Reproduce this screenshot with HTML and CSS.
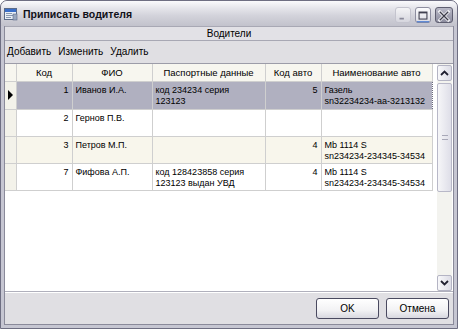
FILE: index.html
```html
<!DOCTYPE html>
<html lang="ru">
<head>
<meta charset="utf-8">
<title>Приписать водителя</title>
<link rel="stylesheet" href="styles.css">
</head>
<body>
<div class="window">
  <div class="titlebar">
    <svg class="app-icon" width="14" height="14" viewBox="0 0 14 14">
      <rect x="0.5" y="1.5" width="12" height="11" fill="#e8eef6" stroke="#5a6a88"/>
      <rect x="1" y="2" width="11" height="3" fill="#3a6ec8"/>
      <rect x="2" y="6" width="6" height="1" fill="#8898b0"/>
      <rect x="2" y="8" width="8" height="1" fill="#8898b0"/>
      <rect x="2" y="10" width="5" height="1" fill="#8898b0"/>
      <rect x="9" y="7" width="4" height="6" fill="#9aa8c0" stroke="#5a6a88" stroke-width="0.6"/>
    </svg>
    <span class="title">Приписать водителя</span>
    <div class="win-buttons">
      <span class="wbtn wbtn-min"><svg width="16" height="16" viewBox="0 0 16 16"><rect x="4" y="10" width="5" height="2" fill="#8a8a9a"/></svg></span>
      <span class="wbtn wbtn-max"><svg width="16" height="16" viewBox="0 0 16 16"><rect x="3.5" y="3.5" width="9" height="8" fill="none" stroke="#3c3c4c" stroke-width="1.2"/><rect x="3.5" y="3.5" width="9" height="1.5" fill="#3c3c4c"/><rect x="1" y="14" width="14" height="1.2" fill="#3a70d0"/></svg></span>
      <span class="wbtn wbtn-close"><svg width="17" height="16" viewBox="0 0 17 16"><path d="M4 3.5 L13 12.5 M13 3.5 L4 12.5" stroke="#f4f4f8" stroke-width="3.2" stroke-linecap="square"/><path d="M4 3.5 L13 12.5 M13 3.5 L4 12.5" stroke="#3a3a48" stroke-width="1.4"/></svg></span>
    </div>
  </div>
  <div class="client">
    <div class="caption">Водители</div>
    <div class="toolbar">
      <span class="tool">Добавить</span>
      <span class="tool">Изменить</span>
      <span class="tool">Удалить</span>
    </div>
    <div class="grid">
      <div class="grid-body">
        <table class="table">
          <colgroup>
            <col class="c-rh"><col class="c-id"><col class="c-fio"><col class="c-pass"><col class="c-car"><col class="c-name">
          </colgroup>
          <thead>
            <tr class="head">
              <th class="rh"></th><th>Код</th><th>ФИО</th><th>Паспортные данные</th><th>Код авто</th><th>Наименование авто</th>
            </tr>
          </thead>
          <tbody>
            <tr class="row r1 selected">
              <td class="rh"><span class="marker"></span></td>
              <td class="num first">1</td>
              <td>Иванов И.А.</td>
              <td>код 234234 серия<br>123123</td>
              <td class="num">5</td>
              <td class="last">Газель<br>sn32234234-aa-3213132</td>
            </tr>
            <tr class="row r2">
              <td class="rh"></td>
              <td class="num">2</td>
              <td>Гернов П.В.</td>
              <td></td>
              <td class="num"></td>
              <td></td>
            </tr>
            <tr class="row r3 alt">
              <td class="rh"></td>
              <td class="num">3</td>
              <td>Петров М.П.</td>
              <td></td>
              <td class="num">4</td>
              <td>Mb 1114 S<br>sn234234-234345-34534</td>
            </tr>
            <tr class="row r4">
              <td class="rh"></td>
              <td class="num">7</td>
              <td>Фифова А.П.</td>
              <td>код 128423858 серия<br>123123 выдан УВД</td>
              <td class="num">4</td>
              <td>Mb 1114 S<br>sn234234-234345-34534</td>
            </tr>
          </tbody>
        </table>
      </div>
      <div class="scrollbar">
        <span class="sb-btn"><svg width="9" height="6" viewBox="0 0 9 6"><path d="M1 5 L4.5 1.5 L8 5" fill="none" stroke="#202030" stroke-width="1.8"/></svg></span>
        <div class="sb-track">
          <span class="sb-thumb"><span class="grip"></span></span>
        </div>
        <span class="sb-btn"><svg width="9" height="6" viewBox="0 0 9 6"><path d="M1 1 L4.5 4.5 L8 1" fill="none" stroke="#202030" stroke-width="1.8"/></svg></span>
      </div>
    </div>
    <div class="footer">
      <button class="btn">OK</button>
      <button class="btn">Отмена</button>
    </div>
  </div>
</div>
</body>
</html>
```

FILE: styles.css
```css
* { box-sizing: border-box; }
html, body { margin: 0; padding: 0; }
body {
  width: 458px;
  height: 329px;
  overflow: hidden;
  background: #ffffff;
  font-family: "Liberation Sans", Arial, sans-serif;
  color: #000;
}
.window {
  width: 458px;
  height: 329px;
  display: flex;
  flex-direction: column;
  border: 1px solid #6e6e82;
  border-radius: 7px 7px 0 0;
  background: #c6c6d2;
  overflow: hidden;
}
.titlebar {
  height: 25px;
  flex: none;
  display: flex;
  align-items: center;
  padding: 0 4px 0 3px;
  background: linear-gradient(#fafafc 0%, #e4e4ea 30%, #d2d2da 60%, #c2c2cc 100%);
}
.app-icon { flex: none; margin-right: 5px; margin-top: 1px; }
.title {
  font-weight: bold;
  font-size: 10.5px;
  color: #101018;
  flex: 1;
  margin-top: 1px;
}
.win-buttons { display: flex; gap: 4px; margin-top: 2px; }
.wbtn {
  width: 16px;
  height: 16px;
  border-radius: 3px;
  display: flex;
}
.wbtn-min {
  background: linear-gradient(#f4f4f6, #d6d6de);
  border: 1px solid #c4c4ce;
}
.wbtn-max {
  background: linear-gradient(#fcfcfe, #dcdce4);
  border: 1px solid #8e8ea0;
}
.wbtn-close {
  width: 18px;
  background: linear-gradient(#b8b8c6, #8e8ea0);
  border: 1px solid #5e5e70;
}
.client {
  flex: 1;
  margin: 0 3px 3px 3px;
  background: #e0dfe3;
  border-left: 1px solid #8a8a9a;
  border-right: 1px solid #8a8a9a;
  border-bottom: 1px solid #8a8a9a;
  display: flex;
  flex-direction: column;
}
.caption {
  height: 15px;
  flex: none;
  border-top: 1px solid #a8a8b4;
  border-bottom: 1px solid #a8a8b4;
  font-size: 10px;
  line-height: 13px;
  text-align: center;
  background: #e2e1e6;
}
.toolbar {
  height: 22px;
  flex: none;
  display: flex;
  align-items: center;
  gap: 7px;
  padding-left: 2px;
  font-size: 10px;
  padding-bottom: 1px;
}
.grid {
  flex: 1;
  display: flex;
  background: #ffffff;
  border-top: 1px solid #9c9ca8;
  border-bottom: 1px solid #b0b0bc;
  padding-right: 1px;
}
.grid-body { flex: 1; overflow: hidden; }
.table {
  width: 427px;
  table-layout: fixed;
  border-collapse: collapse;
  font-size: 9px;
}
.c-rh { width: 11px; }
.c-id { width: 56px; }
.c-fio { width: 80px; }
.c-pass { width: 113px; }
.c-car { width: 56px; }
.c-name { width: 111px; }
.head { height: 17px; }
.head th {
  font-weight: normal;
  font-size: 9.5px;
  background: #f7f6ef;
  border: 1px solid #cfcfcf;
  border-top: none;
  padding: 0;
  line-height: 15px;
  white-space: nowrap;
}
.head th.rh { border-left: none; }
.row td {
  border: 1px solid #cfcfcf;
  vertical-align: top;
  padding: 3px 3px 0 3px;
  line-height: 11.5px;
  white-space: nowrap;
  overflow: hidden;
}
.row td.rh {
  background: #f3f2ea;
  border-left: none;
  padding: 0;
  vertical-align: middle;
}
.row td.num { text-align: right; }
.r1 { height: 28px; }
.r2 { height: 27px; }
.r3 { height: 26px; }
.r4 { height: 27px; }
.alt td { background: #f8f6ec; }
.alt td.rh { background: #f3f2ea; }
.selected td:not(.rh) {
  background: #b0b0c0;
  border-top: 1px dotted #6a6a7a;
  border-bottom: 1px dotted #6a6a7a;
}
.selected td.first { border-left: 1px dotted #6a6a7a; }
.selected td.last { border-right: 1px dotted #6a6a7a; }
.marker {
  display: block;
  width: 0;
  height: 0;
  margin-left: 3px;
  border-top: 5px solid transparent;
  border-bottom: 5px solid transparent;
  border-left: 5px solid #000;
}
.scrollbar {
  width: 15px;
  flex: none;
  display: flex;
  flex-direction: column;
  background: #f3f3ef;
  padding-top: 1px;
}
.sb-btn {
  height: 16px;
  flex: none;
  display: flex;
  align-items: center;
  justify-content: center;
  border: 1px solid #b4b4c4;
  border-radius: 2px;
  background: linear-gradient(90deg, #f8f8fa, #dcdce6);
}
.sb-track {
  flex: 1;
  padding: 2px 0;
  display: flex;
  flex-direction: column;
}
.sb-thumb {
  height: 109px;
  border: 1px solid #b8b8c8;
  border-radius: 2px;
  background: linear-gradient(90deg, #f6f6f8, #dedee8);
  display: flex;
  align-items: center;
  justify-content: center;
}
.grip {
  width: 6px;
  height: 5px;
  border-top: 1px solid #a8a8b8;
  border-bottom: 1px solid #a8a8b8;
}
.footer {
  height: 32px;
  flex: none;
  display: flex;
  justify-content: flex-end;
  align-items: flex-start;
  gap: 7px;
  padding: 5px 4px 0 0;
  border-top: 1px solid #ffffff;
}
.btn {
  width: 63px;
  height: 21px;
  font-family: "Liberation Sans", Arial, sans-serif;
  font-size: 10px;
  color: #000;
  border: 1px solid #4a4a60;
  border-radius: 3px;
  background: linear-gradient(#ffffff 0%, #f2f2f4 60%, #d8d8e0 100%);
  padding: 0;
}
```
